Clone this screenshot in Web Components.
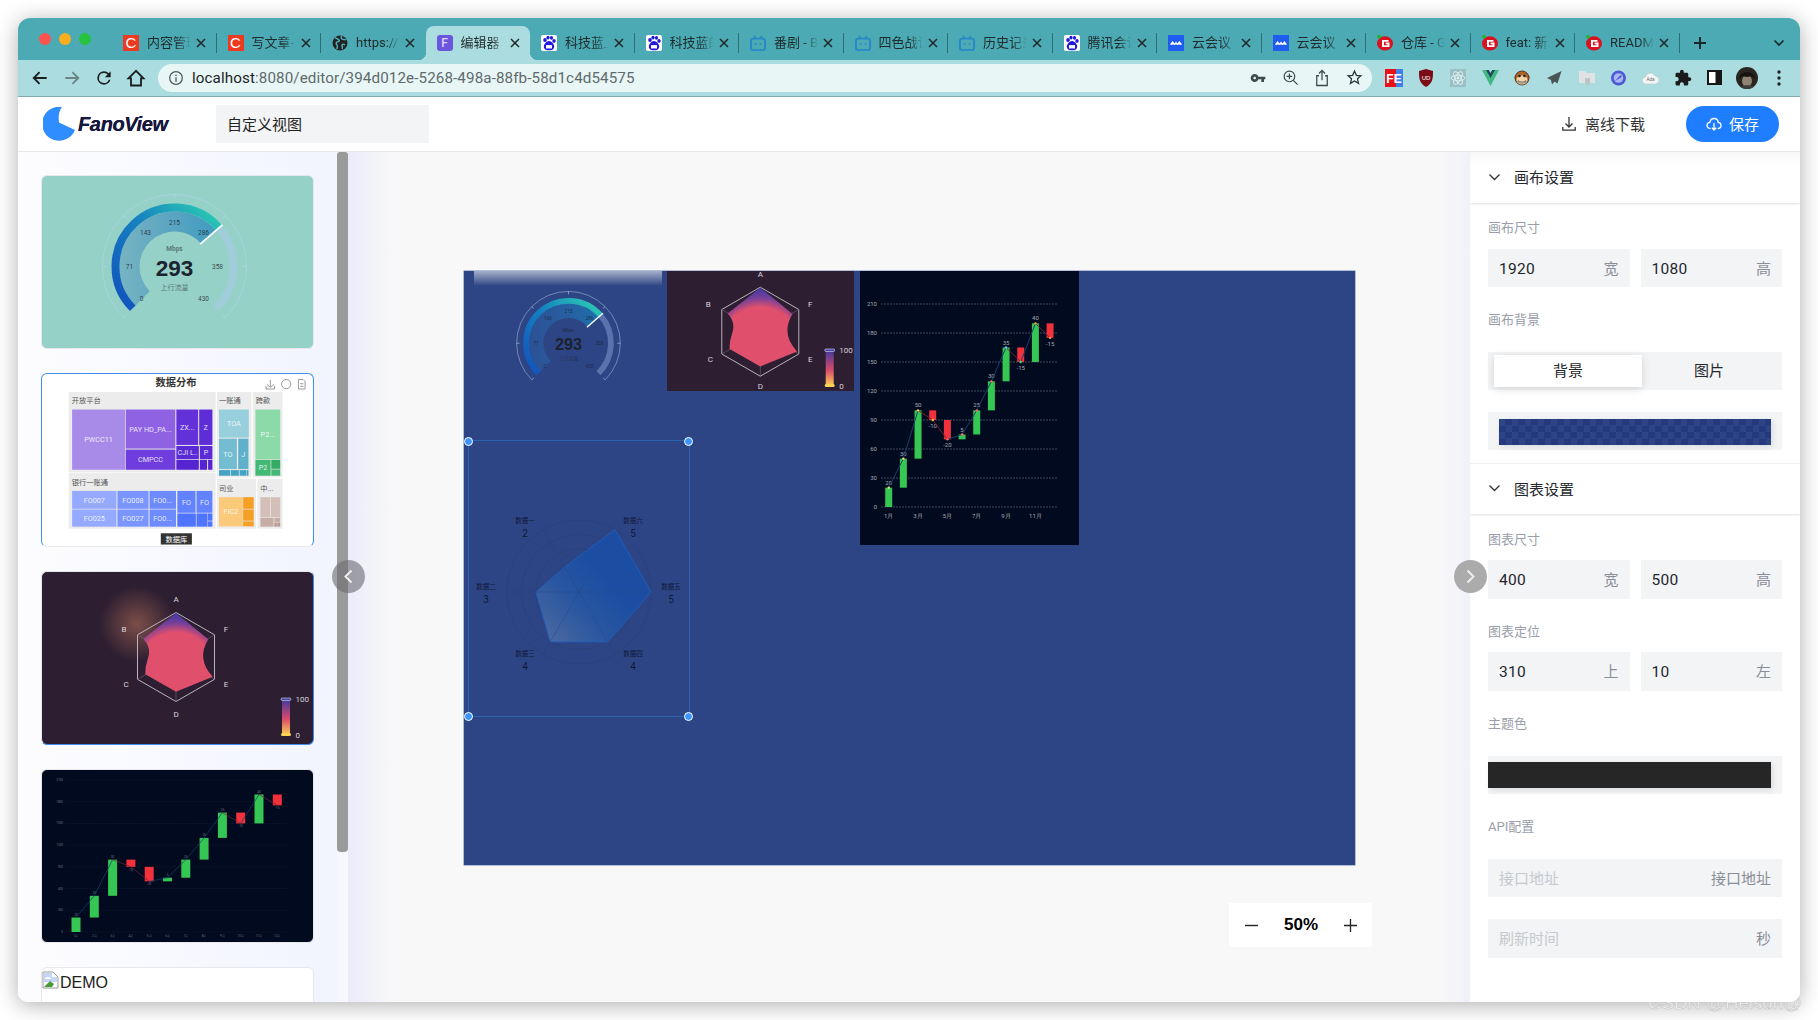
<!DOCTYPE html>
<html lang="zh"><head><meta charset="utf-8"><title>FanoView</title>
<style>
html,body{margin:0;background:#fff;overflow:hidden;width:1818px;height:1020px;font-family:Roboto,"Noto Sans CJK SC",sans-serif}
</style></head><body>
<app-window>
  <browser-tabs></browser-tabs>
  <browser-toolbar></browser-toolbar>
  <app-header></app-header>
  <editor-body>
    <thumb-rail slot="left">
      <thumb-card style="--bg:#95d1c6"><gauge-chart scale="1" cx="132.5" cy="90.5" ring="rgba(175,212,232,.7)" rest="#a0cdd9"></gauge-chart></thumb-card>
      <thumb-card style="--bg:#fff;--bt:#3f8ff0;--bl:#3f8ff0;--br:#3f8ff0"><treemap-chart></treemap-chart></thumb-card>
      <thumb-card style="--bg:#2d1e31;--br:#3f8ff0;--bb:#3f8ff0"><radar-chart w="270" h="170" cx="134" cy="85" lx="244" ly="126" glow="1"></radar-chart></thumb-card>
      <thumb-card style="--bg:#010a1e"><waterfall-chart w="270" h="170" x0="34" step="18.3" bw="9" y0="162" y1="10" gl="25" gr="244" fs="3" small="1"></waterfall-chart></thumb-card>
      <thumb-card style="--bg:#fff"><broken-image></broken-image></thumb-card>
    </thumb-rail>
    <work-space slot="center"></work-space>
    <side-panel slot="right"></side-panel>
  </editor-body>
  <span slot="mark">CSDN @Helson@</span>
</app-window>
<script>
const def=(name,render)=>customElements.define(name,class extends HTMLElement{
  constructor(){super();this.attachShadow({mode:'open'})}
  connectedCallback(){this.shadowRoot.innerHTML=render(this)}
});
const num=(el,k,d)=>el.hasAttribute(k)?parseFloat(el.getAttribute(k)):d;
const FONT='Roboto,"Noto Sans CJK SC",sans-serif';

def('app-window',()=>`<style>
:host{display:flex;flex-direction:column;position:relative;width:1782px;height:984px;margin:18px;background:#fff;border-radius:12px 12px 10px 10px;box-shadow:0 3px 22px rgba(0,0,0,.32)}
.clip{display:flex;flex-direction:column;flex:1;min-height:0;overflow:hidden;border-radius:inherit}
.mark{position:absolute;right:-2px;bottom:-12px;font:18.500px "Liberation Sans",sans-serif;color:rgba(255,255,255,.8);-webkit-text-stroke:.5px #bdbdbd;white-space:nowrap;letter-spacing:.1px}
</style><div class="clip"><slot></slot></div><div class="mark"><slot name="mark"></slot></div>`);

/* favicons */
const FAV={
 c:`<div style="width:16px;height:16px;background:#ec3a22;color:#fff;font:400 15px/16px 'Liberation Sans';text-align:center">C</div>`,
 globe:`<svg width="16" height="16" viewBox="0 0 16 16"><circle cx="8" cy="8" r="7.5" fill="#222"/><path d="M3 3c2 0 3 1 4 2s-1 2-2 2-1 2 0 3 0 3 0 4M10 1c-1 1-1 2 0 3s3 0 4 1M13 10c-1-1-3-1-3 0s1 3 0 4" fill="none" stroke="#4baab3" stroke-width="1.6"/></svg>`,
 f:`<div style="width:16px;height:16px;border-radius:3px;background:#6a55dc;color:#dcd6ff;font:500 12px/16px Roboto;text-align:center">F</div>`,
 paw:`<svg width="16" height="16" viewBox="0 0 16 19" preserveAspectRatio="none"><rect width="16" height="19" rx="2" fill="#fff"/><g fill="#2319dc"><ellipse cx="4" cy="6" rx="1.8" ry="2.4"/><ellipse cx="7" cy="3" rx="1.6" ry="2.2"/><ellipse cx="10.5" cy="3.4" rx="1.6" ry="2.2"/><ellipse cx="13" cy="7" rx="1.7" ry="2.3"/><path d="M8 7c-3 0-6 5-5 8s3 3 5 3 4 0 5-3-2-8-5-8z"/></g><rect x="5" y="12" width="6" height="4" fill="#fff"/></svg>`,
 tv:`<svg width="16" height="16" viewBox="0 0 16 18" preserveAspectRatio="none"><path d="M4 1l2 3M12 1l-2 3" stroke="#2a88c8" stroke-width="1.6"/><rect x="1" y="4" width="14" height="13" rx="2.5" fill="none" stroke="#2a88c8" stroke-width="2"/><circle cx="5.5" cy="10" r="1" fill="#2a88c8"/><circle cx="10.5" cy="10" r="1" fill="#2a88c8"/></svg>`,
 cloud:`<svg width="16" height="16" viewBox="0 0 16 19" preserveAspectRatio="none"><rect width="16" height="19" fill="#1f5cf2"/><path d="M2 11l2.6-4 2 3 1.4-2.2 1.4 2.2 2-3 2.6 4c-1 1.4-2.4 1-3 0-.8 1.2-2.2 1.2-3 0-.8 1.2-2.2 1.2-3 0-.6 1-2 1.4-3 0z" fill="#fff"/></svg>`,
 g:`<svg width="16" height="16" viewBox="0 0 16 18" preserveAspectRatio="none"><circle cx="8" cy="9.5" r="8" fill="#d8121f"/><path d="M11.5 6.5H6v6h5.5V9.5H8.6" fill="none" stroke="#fff" stroke-width="2"/><circle cx="2" cy="2" r="2" fill="#1fb52f"/></svg>`
};
def('browser-tab',el=>{const a=el.hasAttribute('active');return `<style>
:host{display:block;flex:none;width:104.5px;height:34px;position:relative;box-sizing:border-box}
.bg{position:absolute;inset:0;background:${a?'#abdcdf':'transparent'};border-radius:8px 8px 0 0}
.bg::before,.bg::after{content:"";display:${a?'block':'none'};position:absolute;bottom:0;width:8px;height:8px;background:radial-gradient(circle at 0 0,transparent 8px,#abdcdf 8.5px)}
.bg::before{left:-8px}
.bg::after{right:-8px;background:radial-gradient(circle at 100% 0,transparent 8px,#abdcdf 8.5px)}
.fav{position:absolute;left:11px;top:9px;width:16px;height:16px;display:flex;align-items:center}
.t{position:absolute;left:35px;top:7px;height:20px;font:13px/19px ${FONT};color:#1f2a2c;white-space:nowrap;-webkit-mask-image:linear-gradient(90deg,#000 30px,transparent 44px);mask-image:linear-gradient(90deg,#000 30px,transparent 44px)}
svg.x{position:absolute;left:84px;top:12px}
.sep{position:absolute;right:0;top:7px;width:1px;height:20px;background:#2e6d74;display:${el.hasAttribute('nosep')?'none':'block'}}
</style><div class="bg"></div><div class="fav">${FAV[el.getAttribute('icon')]}</div><div class="t">${el.getAttribute('label')}</div>
<svg class="x" width="10" height="10" viewBox="0 0 10 10"><path d="M1 1l8 8M9 1l-8 8" stroke="#1f2628" stroke-width="1.5"/></svg><div class="sep"></div>`});

def('browser-tabs',()=>{
 const T=[['c','内容管理',1],['c','写文章-',1],['globe','https://',0,1],['f','编辑器',0,1,1],['paw','科技蓝_',1],['paw','科技蓝的',1],['tv','番剧 - B',1],['tv','四色战记',1],['tv','历史记录',1],['paw','腾讯会议',1],['cloud','云会议',1],['cloud','云会议',1],['g','仓库 - G',1],['g','feat: 新',1],['g','READM',1]];
 return `<style>:host{display:flex;flex:none;height:42px;background:#4baab3;position:relative}
.lights{display:flex;gap:8px;position:absolute;left:21px;top:15px}
.lights i{display:block;width:12px;height:12px;border-radius:50%}
.row{display:flex;padding:8px 0 0 94px;align-items:flex-end}
.plus{position:absolute;left:1675px;top:18px}.more{position:absolute;left:1755px;top:20px}
</style><div class="lights"><i style="background:#ff5350"></i><i style="background:#fdae1e"></i><i style="background:#27c33f"></i></div>
<div class="row">${T.map(t=>`<browser-tab icon="${t[0]}" label="${t[1]}" ${t[2]?'':'nosep'} ${t[4]?'active':''}></browser-tab>`).join('')}</div>
<svg class="plus" width="14" height="14" viewBox="0 0 14 14"><path d="M7 1v12M1 7h12" stroke="#16282a" stroke-width="2"/></svg>
<svg class="more" width="12" height="10" viewBox="0 0 12 10"><path d="M1.5 2.5L6 7l4.5-4.5" fill="none" stroke="#16282a" stroke-width="1.7"/></svg>`});

const svg24=(b,s=20)=>`<svg width="${s}" height="${s}" viewBox="0 0 24 24">${b}</svg>`;
const EXT=[
 `<svg width="18" height="18" viewBox="0 0 18 18"><rect width="11" height="18" fill="#e5121c"/><rect x="11" width="7" height="18" fill="#3f7fe8"/><text x="9" y="14" text-anchor="middle" font-family="Liberation Sans" font-weight="700" font-size="12" fill="#fff">FE</text></svg>`,
 `<svg width="16" height="18" viewBox="0 0 16 18"><path d="M8 0l7 2c0 7 0 12-7 16C1 14 1 9 1 2z" fill="#7a0c16"/><text x="8" y="11" text-anchor="middle" font-family="Liberation Sans" font-size="6" fill="#fff">UD</text></svg>`,
 `<svg width="16" height="18" viewBox="0 0 16 18"><rect width="16" height="18" fill="#9cbfc3"/><g fill="none" stroke="#dff2f4" stroke-width=".9"><ellipse cx="8" cy="9" rx="7" ry="2.8"/><ellipse cx="8" cy="9" rx="7" ry="2.8" transform="rotate(60 8 9)"/><ellipse cx="8" cy="9" rx="7" ry="2.8" transform="rotate(120 8 9)"/></g><circle cx="8" cy="9" r="1.4" fill="#dff2f4"/></svg>`,
 `<svg width="17" height="16" viewBox="0 0 17 16"><path d="M0 0h4.5l4 7 4-7H17L8.500 16z" fill="#41b883"/><path d="M4 0h2.800l1.700 3 1.700-3H13L8.500 8z" fill="#1f4a5c"/></svg>`,
 `<svg width="16" height="18" viewBox="0 0 16 18"><circle cx="2.500" cy="8" r="2" fill="#b4642a"/><circle cx="13.500" cy="8" r="2" fill="#b4642a"/><circle cx="8" cy="9" r="7" fill="#b4642a" stroke="#3a2313" stroke-width=".8"/><ellipse cx="8" cy="11" rx="5.500" ry="4.500" fill="#f3d6a8"/><circle cx="5.500" cy="7" r="1.300" fill="#222"/><circle cx="10.500" cy="7" r="1.300" fill="#222"/><path d="M4 11.500c2 2 6 2 8 0v1.500c-2 1.500-6 1.500-8 0z" stroke="#333" stroke-width=".6" fill="#fff"/></svg>`,
 `<svg width="15" height="14" viewBox="0 0 15 14"><path d="M14.500 0L0 7l4 2 1 4.500 2.500-3 3 2z" fill="#4a5556"/></svg>`,
 `<svg width="16" height="18" viewBox="0 0 16 18"><path d="M0 2h6l2 2h8v10H0z" fill="#dfe3e4"/><path d="M6 9h5v5l-2.500 3L6 14z" fill="#bcc4c6"/></svg>`,
 `<svg width="17" height="18" viewBox="0 0 17 18"><circle cx="8.500" cy="9" r="7.500" fill="#4b58d8"/><circle cx="8.500" cy="9" r="4.800" fill="#abb7ee"/><path d="M5 12L9.500 7l2.500-1-1 2.500z" fill="#4b58d8"/></svg>`,
 `<svg width="17" height="12" viewBox="0 0 17 12"><path d="M4 12a3.500 3.500 0 0 1-.5-7A5 5 0 0 1 13 4a4 4 0 0 1 0 8z" fill="#f2f5f5" stroke="#b6c4c6" stroke-width=".6"/><text x="8.500" y="9" text-anchor="middle" font-family="Liberation Sans" font-size="4.500" fill="#666">Ada</text></svg>`,
 svg24(`<path fill="#1b1b1b" d="M20.500 11H19V7c0-1.100-.9-2-2-2h-4V3.500C13 2.120 11.880 1 10.500 1S8 2.120 8 3.500V5H4c-1.100 0-1.990.9-1.990 2v3.800H3.500c1.490 0 2.700 1.210 2.700 2.700s-1.210 2.700-2.700 2.700H2V20c0 1.100.9 2 2 2h3.800v-1.500c0-1.490 1.210-2.700 2.700-2.700 1.490 0 2.700 1.210 2.700 2.700V22H17c1.100 0 2-.9 2-2v-4h1.500c1.380 0 2.500-1.120 2.500-2.500S21.880 11 20.500 11z"/>`,18),
 `<svg width="15" height="15" viewBox="0 0 15 15"><rect width="15" height="15" fill="#161616"/><rect x="2" y="2" width="6.500" height="11" fill="#fff"/></svg>`,
 `<svg width="22" height="22" viewBox="0 0 22 22"><defs><clipPath id="av"><circle cx="11" cy="11" r="11"/></clipPath></defs><g clip-path="url(#av)"><rect width="22" height="22" fill="#2a2520"/><ellipse cx="11" cy="14" rx="5" ry="6" fill="#8f8374"/><path d="M3 12C3 3 19 3 19 12l-3-3-5 1-5-1z" fill="#15120f"/><path d="M2 22c2-5 16-5 18 0z" fill="#3b3d37"/></g></svg>`,
 `<svg width="4" height="16" viewBox="0 0 4 16"><circle cx="2" cy="2" r="1.700" fill="#222"/><circle cx="2" cy="8" r="1.700" fill="#222"/><circle cx="2" cy="14" r="1.700" fill="#222"/></svg>`
];
def('browser-toolbar',()=>`<style>
:host{display:flex;flex:none;align-items:center;height:37px;box-sizing:border-box;background:#abdcdf;border-bottom:1px solid #7fa9ac;padding:0 0 1px 6px}
.b{flex:none;width:32px;height:32px;display:flex;align-items:center;justify-content:center}
.url{flex:none;margin-left:6px;width:1214px;height:28px;border-radius:14px;background:#e8f6f6;display:flex;align-items:center;box-sizing:border-box;padding:0 2px 0 10px}
.txt{flex:1;margin-left:8px;font:15.200px/28px Roboto,sans-serif;letter-spacing:.1px;color:#5f6a6c;white-space:nowrap}
.txt b{font-weight:400;color:#1c2426}
.url .b{height:28px}
.exts{display:flex;margin-left:6px}.exts .b{width:32.100px}
</style>
<div class="b">${svg24(`<path d="M20 12H5M11.500 5L4.500 12l7 7" fill="none" stroke="#1a1f20" stroke-width="2.200"/>`)}</div>
<div class="b">${svg24(`<path d="M4 12h15M12.500 5l7 7-7 7" fill="none" stroke="#6d8486" stroke-width="2.200"/>`)}</div>
<div class="b">${svg24(`<path fill="#1a1f20" d="M17.650 6.350A7.950 7.950 0 0 0 12 4a8 8 0 1 0 7.730 10h-2.080A6 6 0 1 1 12 6c1.660 0 3.140.69 4.220 1.780L13 11h7V4z"/>`)}</div>
<div class="b">${svg24(`<path d="M12 3.500L3 12.500h3V21h12v-8.500h3z" fill="none" stroke="#1a1f20" stroke-width="2.200" stroke-linejoin="miter"/>`)}</div>
<div class="url">${svg24(`<circle cx="12" cy="12" r="9.500" fill="none" stroke="#4e5a5c" stroke-width="1.900"/><path d="M12 11v6.500M12 7v2" stroke="#4e5a5c" stroke-width="2"/>`,16)}
<div class="txt"><b>localhost</b>:8080/editor/394d012e-5268-498a-88fb-58d1c4d54575</div>
<div class="b">${svg24(`<path fill="#3f4a4c" d="M12.650 10C11.830 7.670 9.610 6 7 6c-3.310 0-6 2.690-6 6s2.690 6 6 6c2.610 0 4.830-1.670 5.650-4H17v4h4v-4h2v-4H12.650zM7 14c-1.100 0-2-.9-2-2s.9-2 2-2 2 .9 2 2-.9 2-2 2z"/>`,16)}</div>
<div class="b">${svg24(`<circle cx="10.500" cy="10.500" r="7.500" fill="none" stroke="#3f4a4c" stroke-width="1.700"/><path d="M16 16l6 6M10.500 6.500v8M6.500 10.500h8" stroke="#3f4a4c" stroke-width="1.700"/>`,17)}</div>
<div class="b">${svg24(`<path d="M8 9H5v13h14V9h-3M12 15V2M8 6l4-4 4 4" fill="none" stroke="#3f4a4c" stroke-width="1.700"/>`,18)}</div>
<div class="b">${svg24(`<path d="M12 3l2.700 6 6.300.6-4.800 4.200 1.500 6.400-5.700-3.400-5.700 3.400 1.500-6.400L3 9.600 9.300 9z" fill="none" stroke="#2c3638" stroke-width="1.800"/>`,17)}</div>
</div><div class="exts">${EXT.map(e=>`<div class="b">${e}</div>`).join('')}</div>`);

def('app-header',()=>`<style>
:host{display:flex;flex:none;align-items:center;height:55px;box-sizing:border-box;border-bottom:1px solid #e6e6e8;background:#fff;padding:0 21px 0 25px;position:relative;z-index:3}
.name{margin-left:3px;font:italic 700 20px "Liberation Sans",sans-serif;color:#17173d;letter-spacing:-.35px;width:90px;white-space:nowrap;text-shadow:0 0 .4px #17173d}
.title{margin-left:48px;width:213px;height:38px;box-sizing:border-box;padding:2px 0 0 11px;background:#f3f4f6;font:15px/36px ${FONT};color:#222}
.sp{flex:1}
.dl{display:flex;align-items:center;gap:9px;font:15px ${FONT};color:#333;margin-right:41px}
.dl span,.save span{position:relative;top:-1px}
.save{display:flex;align-items:center;justify-content:center;gap:7px;width:93px;height:36px;border-radius:18px;background:#1f7dff;color:#fff;font:15px ${FONT}}
</style>
<svg width="32" height="34" viewBox="0 0 32 34"><path d="M19 0A17 17 0 1 0 32 23L16 15.500Q14.500 6 19 0Z" fill="#2f8dff"/></svg>
<div class="name">FanoView</div><div class="title">自定义视图</div><div class="sp"></div>
<div class="dl"><svg width="14" height="14" viewBox="0 0 14 14"><path d="M7 0v9.500M3.500 6.500L7 10l3.500-3.500M.8 10v3.200h12.400V10" fill="none" stroke="#333" stroke-width="1.300"/></svg><span>离线下载</span></div>
<div class="save"><svg width="16" height="14" viewBox="0 0 16 14"><path d="M4.500 11.500C2 11.500 1 10 1 8.300 1 6.600 2.400 5.400 3.800 5.400 4.300 3 6 1.500 8 1.500c2.300 0 4 1.700 4.200 3.900 1.500.1 2.800 1.300 2.800 3 0 1.700-1.200 3.100-3.300 3.100M8 6v7M5.800 10.800L8 13l2.200-2.200" fill="none" stroke="#fff" stroke-width="1.300"/></svg><span>保存</span></div>`);

def('editor-body',()=>`<style>:host{display:flex;flex:1;min-height:0;position:relative}
.c{flex:1;min-width:0;display:flex}
</style><slot name="left"></slot><div class="c"><slot name="center"></slot></div><slot name="right"></slot>
`);

def('thumb-rail',()=>`<style>
:host{display:flex;flex:none;width:330px;height:100%;background:#fff;position:relative;z-index:2}
.list{flex:none;width:319px;box-sizing:border-box;padding:23px 0 0 23px;display:flex;flex-direction:column;gap:24px;overflow:hidden;background:linear-gradient(90deg,#fdfdff,#f2f4fe)}
.bar{flex:none;width:11px;background:linear-gradient(90deg,#f5f6ff,#f8f8ff)}
.bar i{display:block;height:700px;background:#9a9a9a;border-radius:3px 3px 4px 4px}
</style><div class="list"><slot></slot></div><div class="bar"><i></i></div>`);

def('thumb-card',()=>`<style>
:host{display:block;flex:none;width:273px;height:174px;box-sizing:border-box;background:var(--bg,#fff);border-radius:6px;border:1.500px solid #e6e8ee;border-top-color:var(--bt,#e6e8ee);border-left-color:var(--bl,#e6e8ee);border-right-color:var(--br,#e6e8ee);border-bottom-color:var(--bb,#e6e8ee);overflow:hidden}
</style><slot></slot>`);

def('broken-image',()=>`<style>:host{display:flex;align-items:flex-start;font:16px "Liberation Sans",sans-serif;color:#222;padding-top:3px}span{line-height:24px;margin-left:0}</style>
<svg width="18" height="18" viewBox="0 0 18 18"><path d="M1 1h10l5 5v11H1z" fill="#fff" stroke="#9a9a9a"/><path d="M2 2h8v4h5v5H2z" fill="#c4d6f8"/><path d="M2 16l6-6 4 3-2 3z" fill="#4b9a3a"/><path d="M3 8a3 2 0 0 1 6 0z" fill="#fff"/></svg><span>DEMO</span>`);

/* gauge */
def('gauge-chart',el=>{
 const s=num(el,'scale',1),cx=num(el,'cx',134),cy=num(el,'cy',92),ring=el.getAttribute('ring'),rest=el.getAttribute('rest');
 const pt=(r,f)=>{const t=(225-270*f)*Math.PI/180;return [(cx+r*Math.cos(t)).toFixed(2),(cy-r*Math.sin(t)).toFixed(2)]};
 const arc=(r,a,b)=>{const p=pt(r,a),q=pt(r,b);return `M${p} A${r} ${r} 0 ${(b-a)*270>180?1:0} 1 ${q}`};
 const F=293/430,tk=[0,1,2,3,4,5,6].map(i=>{const a=pt(68,i/6),b=pt(72,i/6);return `M${a}L${b}`}).join('');
 const secA=arc(55,0,F),q0=pt(35,F),q1=pt(35,0);
 const lab=[['0',-33,34],['71',-45,2],['143',-29,-32],['215',0,-42],['286',29,-32],['358',43,2],['430',29,34]];
 return `<style>:host{display:block;line-height:0}</style>
<svg width="${272*s}" height="${174*s}" viewBox="0 0 272 174" font-family="${FONT.replace(/"/g,"'")}">
<defs><linearGradient id="p" gradientUnits="userSpaceOnUse" x1="85" y1="130" x2="175" y2="40"><stop offset="0" stop-color="#1157bd"/><stop offset=".55" stop-color="#1682c0"/><stop offset="1" stop-color="#2ac8b4"/></linearGradient>
<linearGradient id="s" gradientUnits="userSpaceOnUse" x1="75" y1="0" x2="185" y2="0"><stop offset="0" stop-color="#2a6cb8" stop-opacity=".28"/><stop offset="1" stop-color="#1486c0" stop-opacity=".72"/></linearGradient></defs>
<path d="${arc(72,0,1)}" fill="none" stroke="${ring}" stroke-width="1"/><path d="${tk}" stroke="${ring}" stroke-width="1.300"/>
<path d="${arc(59,F,1)}" fill="none" stroke="${rest}" stroke-width="8"/>
<path d="${secA} L${q0} A35 35 0 1 0 ${q1} Z" fill="url(#s)"/>
<path d="${arc(59,0,F)}" fill="none" stroke="url(#p)" stroke-width="8"/>
<path d="M${pt(34,F)}L${pt(63.500,F)}" stroke="#fff" stroke-width="1.800"/>
<g text-anchor="middle" fill="#1b2230">${lab.map(l=>`<text x="${cx+l[1]}" y="${cy+l[2]}" font-size="6.500" fill-opacity=".8">${l[0]}</text>`).join('')}
<text x="${cx}" y="${cy-16}" font-size="6.500" font-weight="700" fill-opacity=".55">Mbps</text>
<text x="${cx}" y="${cy+9}" font-size="22.500" font-weight="700" font-family="Liberation Sans,sans-serif">293</text>
<text x="${cx}" y="${cy+23}" font-size="7" fill-opacity=".55">上行流量</text></g></svg>`});

/* radar */
def('radar-chart',el=>{
 const w=num(el,'w'),h=num(el,'h'),c=num(el,'cx'),d=num(el,'cy'),lx=num(el,'lx'),ly=num(el,'ly'),R=44.500;
 const hex=[0,1,2,3,4,5].map(i=>{const t=(i*60-90)*Math.PI/180;return [(c+R*Math.cos(t)).toFixed(1),(d+R*Math.sin(t)).toFixed(1)]});
 const L=[['A',0,-55],['B',-52,-25],['F',50,-25],['C',-50,30],['E',50,30],['D',0,Math.min(60,h-d-2)]];
 return `<style>:host{display:block;line-height:0}</style>
<svg width="${w}" height="${h}" viewBox="0 0 ${w} ${h}" font-family="Roboto,sans-serif">
<defs><radialGradient id="g" gradientUnits="userSpaceOnUse" cx="${c}" cy="${d+15}" r="60"><stop offset="0" stop-color="#e0506c"/><stop offset=".66" stop-color="#e0506c"/><stop offset=".82" stop-color="#74409a"/><stop offset="1" stop-color="#3a39a2"/></radialGradient>
<linearGradient id="l" x1="0" y1="0" x2="0" y2="1"><stop offset="0" stop-color="#3d3aa0"/><stop offset=".55" stop-color="#d9486c"/><stop offset="1" stop-color="#fcd253"/></linearGradient>
<radialGradient id="gl"><stop offset="0" stop-color="#e8916a" stop-opacity=".42"/><stop offset="1" stop-color="#e8916a" stop-opacity="0"/></radialGradient></defs>
${el.hasAttribute('glow')?`<circle cx="${c-39}" cy="${d-33}" r="38" fill="url(#gl)"/>`:''}
<path d="M${hex.join('L')}Z" fill="none" stroke="#b9b3bb" stroke-width="1"/>
<path d="${hex.slice(0,3).map((p,i)=>`M${p}L${hex[i+3]}`).join('')}" stroke="#6f6473" stroke-width=".6"/>
<path d="M${c} ${d-44}L${c-32.700} ${d-18.300}Q${c-24} ${d-9} ${c-28.300} ${d+2.300}Q${c-31} ${d+10} ${c-30.700} ${d+17.300}L${c} ${d+34.700}L${c+36.700} ${d+19.700}Q${c+20} ${d+2} ${c+32.300} ${d-17.700}Z" fill="url(#g)"/>
<g text-anchor="middle" fill="#dcd6de" font-size="8">${L.map(l=>`<text x="${c+l[1]}" y="${d+l[2]}">${l[0]}</text>`).join('')}</g>
<rect x="${lx-4}" y="${ly+1}" width="8" height="36" fill="url(#l)"/>
<rect x="${lx-5}" y="${ly}" width="10" height="2.500" rx="1.200" fill="#4b47a8" stroke="#d9d9ee" stroke-width=".6"/>
<rect x="${lx-5}" y="${ly+35}" width="10" height="3" rx="1.500" fill="#fcd253"/>
<text x="${lx+9.500}" y="${ly+4}" fill="#d8d2da" font-size="8">100</text><text x="${lx+9.500}" y="${ly+40}" fill="#d8d2da" font-size="8">0</text></svg>`});

/* waterfall */
def('waterfall-chart',el=>{
 const w=num(el,'w'),h=num(el,'h'),x0=num(el,'x0'),st=num(el,'step'),bw=num(el,'bw'),y0=num(el,'y0'),y1=num(el,'y1'),gl=num(el,'gl'),gr=num(el,'gr'),fs=num(el,'fs'),small=el.hasAttribute('small');
 const Y=v=>y0-(y0-y1)*v/210,X=i=>x0+st*i;
 const D=[[0,20,'20'],[20,50,'30'],[50,100,'50'],[100,90,'-10'],[90,70,'-20'],[70,75,'5'],[75,100,'25'],[100,130,'30'],[130,165,'35'],[165,150,'-15'],[150,190,'40'],[190,175,'-15']];
 const dots=['#f5d76e','#f5d76e','#f7c948','#f7c948','#ff6b6b','#ff6b6b','#ff6b6b','#ff6b6b','#6ec6ff','#3ddc84','#f59e42','#f59e42'];
 let o='';
 for(let v=0;v<=210;v+=30)o+=`<path d="M${gl} ${Y(v)}H${gr}" stroke="${small?'#1a2436':'#5f6775'}" stroke-width="${small?.5:.7}" stroke-dasharray="${small?'1.500 1':'2 1'}"/><text x="${gl-4}" y="${Y(v)+fs*.35}" text-anchor="end">${small?v*10:v}</text>`;
 D.forEach((d,i)=>{const up=d[1]>d[0],a=Math.max(d[0],d[1]),b=Math.min(d[0],d[1]);
  o+=`<rect x="${X(i)-bw/2}" y="${Y(a)}" width="${bw}" height="${Y(b)-Y(a)}" fill="${up?'#35c653':'#f2313d'}"/>`;
  if(small||i%2==0)o+=`<text x="${X(i)}" y="${y0+fs*1.800}" text-anchor="middle">${i+1}月</text>`;
  o+=`<text x="${X(i)}" y="${up?Y(d[1])-fs*.5:Y(d[1])+fs*1.300}" text-anchor="middle">${d[2]}</text>`;});
 for(let i=0;i<11;i++){const up=D[i+1][1]>D[i][1];o+=`<path d="M${X(i)} ${Y(D[i][1])}L${X(i+1)} ${Y(D[i+1][1])}" stroke="${up?'#17406e':'#7a2030'}" stroke-width="${small?.7:1}"/>`}
 if(!small)D.forEach((d,i)=>o+=`<circle cx="${X(i)}" cy="${Y(d[1])}" r="1.200" fill="${dots[i]}"/>`);
 return `<style>:host{display:block;line-height:0}</style><svg width="${w}" height="${h}" viewBox="0 0 ${w} ${h}" font-family="Roboto,sans-serif" font-size="${fs}" fill="${small?'#6f7582':'#a5abb5'}">${o}</svg>`});

/* treemap */
def('treemap-chart',()=>{
 const g=[[146,697,444,243],[146,942,444,168],[594,697,104,258],[702,697,90,258],[594,959,118,151],[716,959,76,151]];
 const r=[[156,750,160,182,'#a88ae8','PWCC11'],[318,750,150,118,'#8e62e2','PAY HD_PA...'],[318,871,150,61,'#6f3cdd','CMPCC'],[471,750,66,107,'#6232d8','ZX...'],[540,750,40,107,'#5f2dd8','Z'],[471,860,68,40,'#5a2bd5','CJI L..'],[542,860,38,40,'#5a2bd5','P'],[471,902,68,30,'#5524d0'],[542,902,22,30,'#5524d0'],[567,902,13,30,'#5524d0'],
 [156,996,134,54,'#95aaff','FO007'],[156,1052,134,52,'#95aaff','FO025'],[293,996,94,54,'#7b95ff','FO008'],[293,1052,94,52,'#7b95ff','FO027'],[390,996,80,54,'#6d8aff','FO0...'],[390,1052,80,52,'#6d8aff','FO0...'],[474,996,55,66,'#6382ff','FO'],[532,996,48,66,'#6382ff','FO'],[474,1064,56,40,'#4f74ff'],[532,1064,33,40,'#4f74ff'],[566,1064,14,22,'#4f74ff'],[566,1088,14,16,'#4f74ff'],
 [600,750,90,85,'#98cfdd','TOA'],[600,838,54,92,'#74bcd2','TO'],[658,838,31,92,'#5fb0cb','J'],[600,933,34,17,'#47a3c2'],[636,933,24,17,'#47a3c2'],[662,933,20,17,'#47a3c2'],[683,933,6,17,'#47a3c2'],
 [710,750,75,150,'#8ddaa9','P2...'],[710,902,46,48,'#43b974','P2'],[758,902,27,27,'#33ad63'],[758,931,27,19,'#43b974'],
 [600,1015,72,88,'#fac97a','FIC2'],[673,1015,32,35,'#f5a025'],[673,1052,32,34,'#f5a025'],[673,1088,32,15,'#f5a025'],
 [725,1015,30,60,'#d4bfb8'],[757,1015,28,60,'#d4bfb8'],[725,1077,40,27,'#c6aea6'],[767,1077,18,14,'#c6aea6'],[767,1092,8,12,'#b89c94'],[776,1092,9,12,'#b89c94']];
 const H=[['开放平台',155,730],['银行一账通',155,977],['一账通',600,730],['跨款',711,730],['司业',600,995],['中...',725,995]];
 return `<style>:host{display:block;line-height:0}</style><svg width="270" height="171" viewBox="65 643 816 516" font-family="${FONT.replace(/"/g,"'")}">
 ${g.map(a=>`<rect x="${a[0]}" y="${a[1]}" width="${a[2]}" height="${a[3]}" fill="#ececec"/>`).join('')}
 ${r.map(a=>`<rect x="${a[0]}" y="${a[1]}" width="${a[2]}" height="${a[3]}" fill="${a[4]}"/>`+(a[5]?`<text x="${a[0]+a[2]/2}" y="${a[1]+a[3]/2+8}" text-anchor="middle" font-size="22" fill="#fff" fill-opacity=".85">${a[5]}</text>`:'')).join('')}
 ${H.map(a=>`<text x="${a[1]}" y="${a[2]}" font-size="22" fill="#555">${a[0]}</text>`).join('')}
 <text x="470" y="680" text-anchor="middle" font-size="31" font-weight="700" fill="#333">数据分布</text>
 <g fill="none" stroke="#999" stroke-width="3"><path d="M755 660v22M745 674l10 9 10-9M742 678v10h26v-10"/><circle cx="803" cy="673" r="14"/><path d="M840 659h14l6 6v23h-20zM845 672h10M845 680h10"/></g>
 <rect x="424" y="1124" width="94" height="34" fill="#333"/><text x="471" y="1150" text-anchor="middle" font-size="22" fill="#fff">数据库</text></svg>`});

/* polar radar in the selection frame */
def('polar-chart',()=>{
 const c=110,d=151,R=72,pts=[[0,5],[60,5],[120,2],[180,3],[240,4],[300,4]].map(a=>{const t=a[0]*Math.PI/180,r=R*a[1]/5;return [(c+r*Math.cos(t)).toFixed(1),(d-r*Math.sin(t)).toFixed(1)]});
 const L=[['数据一','2',-54,-71],['数据六','5',54,-71],['数据二','3',-93,-5],['数据五','5',92,-5],['数据三','4',-54,62],['数据四','4',54,62]];
 const spokes=[0,60,120].map(a=>{const t=a*Math.PI/180,x=R*Math.cos(t),y=R*Math.sin(t);return `M${c+x} ${d-y}L${c-x} ${d+y}`}).join('');
 return `<style>:host{display:block;line-height:0}</style><svg width="220" height="275" viewBox="0 0 220 275" font-family="${FONT.replace(/"/g,"'")}">
 <defs><linearGradient id="f" x1=".05" y1=".95" x2=".6" y2=".45"><stop offset="0" stop-color="#4c6aa0"/><stop offset=".55" stop-color="#2a56a0"/><stop offset="1" stop-color="#1b4ea2"/></linearGradient></defs>
 <g fill="none" stroke="#2a3f78" stroke-width=".7">${[1,2,3,4,5].map(i=>`<circle cx="${c}" cy="${d}" r="${i*14.4}"/>`).join('')}<path d="${spokes}"/></g>
 <path d="M${pts.join('L')}Z" fill="url(#f)" stroke="#1f5cb8" stroke-width="1"/>
 <path d="${spokes}" stroke="#24498f" stroke-width=".5"/>
 <g text-anchor="middle" fill="#10183a">${L.map(l=>`<text x="${c+l[2]}" y="${d+l[3]+2}" font-size="6.500">${l[0]}</text><text x="${c+l[2]}" y="${d+l[3]+16}" font-size="10">${l[1]}</text>`).join('')}</g></svg>`});

def('selection-frame',()=>`<style>
:host{display:block;position:absolute;left:4.500px;top:170px;width:220px;height:275px;box-sizing:border-box;outline:1.500px solid #2f62ad}
i{position:absolute;width:7px;height:7px;border-radius:50%;background:#3d95ff;border:1px solid #fff}
.a{left:-4.500px;top:-4.500px}.b{right:-4.500px;top:-4.500px}.c{left:-4.500px;bottom:-4.500px}.d{right:-4.500px;bottom:-4.500px}
</style><slot></slot><i class="a"></i><i class="b"></i><i class="c"></i><i class="d"></i>`);

def('art-board',()=>`<style>
:host{display:block;position:relative;width:891px;height:594px;background:#2e4585;box-shadow:0 0 0 .5px #6f86bb}
.strip{position:absolute;left:10px;top:0;width:188px;height:15px;background:linear-gradient(#a3aec8,rgba(255,255,255,0))}
.g{position:absolute;left:7.500px;top:5.800px}.r{position:absolute;left:203px;top:0;background:#2d1e31}.w{position:absolute;left:396px;top:0;background:#010a1e}
</style><div class="strip"></div>
<gauge-chart class="g" scale=".72" ring="rgba(205,220,245,.6)" rest="#5a73ac"></gauge-chart>
<radar-chart class="r" w="187" h="120" cx="93.300" cy="60.700" lx="162.700" ly="78"></radar-chart>
<waterfall-chart class="w" w="219" h="274" x0="28.700" step="14.670" bw="7" y0="236" y1="33" gl="21" gr="198" fs="6"></waterfall-chart>
<selection-frame><polar-chart></polar-chart></selection-frame>`);

def('zoom-box',()=>`<style>
:host{display:flex;position:absolute;right:98px;bottom:55px;width:143px;height:44px;background:#fff;align-items:center;justify-content:space-between;box-sizing:border-box;padding:0 15px 0 16px}
b{font:700 17px "Liberation Sans",sans-serif;color:#000}
</style><svg width="13" height="13" viewBox="0 0 13 13"><path d="M0 6.500h13" stroke="#222" stroke-width="1.400"/></svg><b>50%</b><svg width="13" height="13" viewBox="0 0 13 13"><path d="M0 6.500h13M6.500 0v13" stroke="#222" stroke-width="1.300"/></svg>`);

const round=(side,bg)=>`<svg width="33" height="33" viewBox="0 0 33 33" style="display:block"><circle cx="16.500" cy="16.500" r="16.500" fill="${bg}"/><path d="${side=='l'?'M19.500 10.500L13.500 16.500l6 6':'M13.500 10.500l6 6-6 6'}" fill="none" stroke="#eee" stroke-width="2"/></svg>`;
def('work-space',()=>`<style>
:host{display:block;flex:1;position:relative;box-sizing:border-box;padding:119px 0 0 116px;background:linear-gradient(90deg,#ebecf9 0,rgba(248,248,249,0) 45px),linear-gradient(270deg,#f1f1fa 0,rgba(248,248,249,0) 32px),#f8f8f9}
.l,.r{position:absolute;top:408px;z-index:5}.l{left:-16.500px}.r{right:-16.500px}
</style><art-board></art-board><zoom-box></zoom-box><div class="l">${round('l','rgba(110,110,115,.62)')}</div><div class="r">${round('r','#ababab')}</div>`);

/* right panel parts */
def('section-head',el=>`<style>
:host{display:flex;align-items:center;height:${num(el,'h',51)}px;box-sizing:border-box;padding-left:18px;background:${el.hasAttribute('first')?'linear-gradient(#f7f7f7,#fff 14px)':'#fff'};box-shadow:0 1px 2px rgba(0,0,0,.12);position:relative;font:15px ${FONT};color:#26282c}
span{margin-left:13px;position:relative;top:-1px}
svg{position:relative;top:-1px}
</style><svg width="13" height="8" viewBox="0 0 13 8"><path d="M1.500 1.500l5 5 5-5" fill="none" stroke="#333" stroke-width="1.300"/></svg><span><slot></slot></span>`);
def('field-label',el=>`<style>:host{display:block;height:20px;font:13px/22px ${FONT};color:#9a9ea8;margin:${num(el,'mt',22)}px 0 ${num(el,'mb',12)}px}</style><slot></slot>`);
def('unit-input',el=>{const p=el.hasAttribute('ph');return `<style>
:host{display:flex;flex:1;min-width:0;align-items:center;justify-content:space-between;height:${num(el,'h',38)}px;box-sizing:border-box;padding:0 11px;background:#f3f4f6;font:15px ${FONT}}
.v{font:${p?'15px':'15.500px'} ${p?FONT:'Roboto,sans-serif'};color:${p?'#c6c9ce':'#23262b'};letter-spacing:${p?0:.3}px;position:relative;top:${p?-1:.5}px}
.u{color:#8a8e96;font-size:15px;position:relative;top:-1px}
</style><span class="v">${el.getAttribute('value')||el.getAttribute('ph')}</span><span class="u">${el.getAttribute('unit')}</span>`});
def('input-row',el=>`<style>:host{display:flex;gap:11px;margin-top:${num(el,'mt',0)}px}</style><slot></slot>`);
def('seg-toggle',()=>`<style>
:host{display:flex;height:38px;box-sizing:border-box;padding:3px 6px;background:#f3f4f6;font:15px/32px ${FONT};color:#26282c;text-align:center}
.a{flex:none;width:148px;background:#fff;box-shadow:0 2px 8px rgba(0,0,0,.14)}.b{flex:1}
</style><div class="a">背景</div><div class="b">图片</div>`);
def('color-field',el=>`<style>
:host{display:block;height:38px;box-sizing:border-box;padding:${el.hasAttribute('flush')?'6px 11px 6px 0':'7px 11px'};background:#f3f4f6;margin-top:${num(el,'mt',0)}px}
div{height:26px;box-shadow:2px 2px 6px rgba(0,0,0,.1);${el.getAttribute('fill')}}
</style><div></div>`);
def('side-panel',()=>`<style>
:host{display:block;flex:none;width:330px;background:#fff;position:relative;z-index:1;overflow:hidden}
.b{padding:0 18px}
hr{border:0;height:1px;background:#f1f1f3;margin:13px 0 0}
</style>
<section-head first>画布设置</section-head>
<div class="b">
<field-label mt="14" mb="12">画布尺寸</field-label><input-row><unit-input value="1920" unit="宽"></unit-input><unit-input value="1080" unit="高"></unit-input></input-row>
<field-label mb="23">画布背景</field-label><seg-toggle></seg-toggle>
<color-field mt="22" fill="background-color:#2e4585;background-image:conic-gradient(#24397e 25%,transparent 0 50%,#24397e 0 75%,transparent 0);background-size:13px 13px"></color-field>
</div><hr>
<section-head h="50">图表设置</section-head>
<div class="b">
<field-label mt="15" mb="11">图表尺寸</field-label><input-row><unit-input h="39" value="400" unit="宽"></unit-input><unit-input h="39" value="500" unit="高"></unit-input></input-row>
<field-label mb="11">图表定位</field-label><input-row><unit-input h="39" value="310" unit="上"></unit-input><unit-input h="39" value="10" unit="左"></unit-input></input-row>
<field-label mb="23">主题色</field-label><color-field flush fill="background:#262626"></color-field>
<field-label mb="23">API配置</field-label><input-row><unit-input ph="接口地址" unit="接口地址"></unit-input></input-row>
<input-row mt="22"><unit-input h="39" ph="刷新时间" unit="秒"></unit-input></input-row>
</div>`);
</script>
</body></html>
